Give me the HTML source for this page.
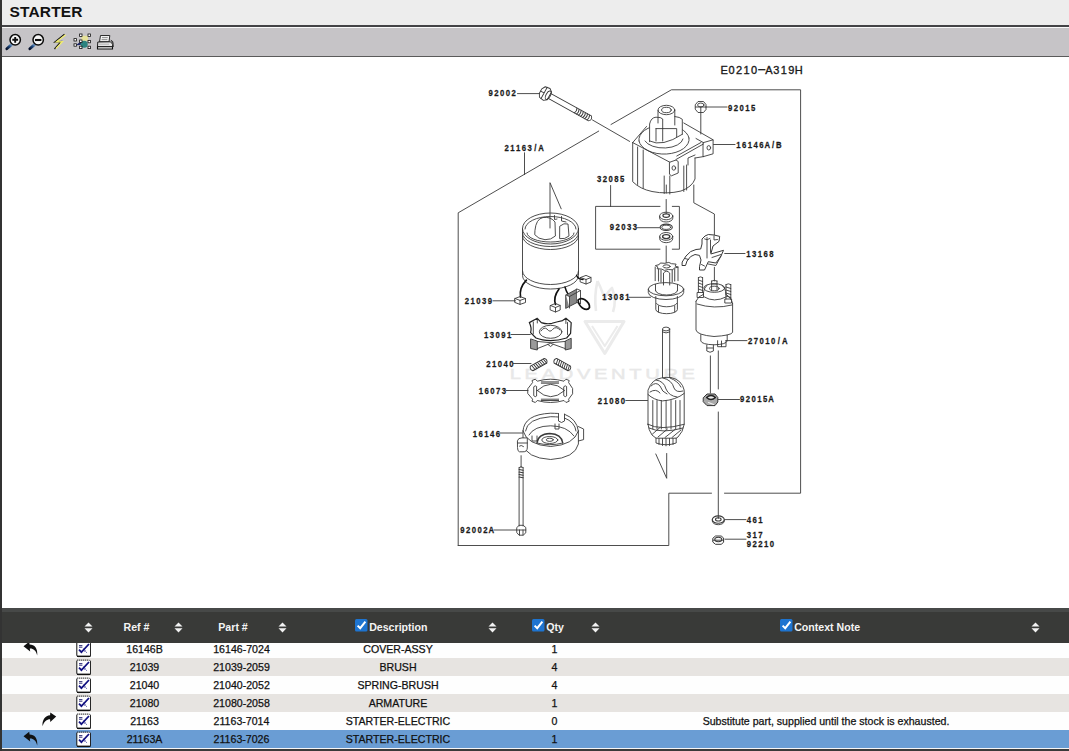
<!DOCTYPE html>
<html><head><meta charset="utf-8">
<style>
html,body{margin:0;padding:0;width:1069px;height:751px;overflow:hidden;background:#fff;font-family:"Liberation Sans",sans-serif;}
#lb{position:absolute;left:0;top:0;width:2px;height:751px;background:#333;}
#title{position:absolute;left:2px;top:0;width:1067px;height:25px;background:#ededed;}
#title span{position:absolute;left:7.5px;top:3px;font-size:15.5px;font-weight:bold;color:#111;letter-spacing:0.15px;}
#l1{position:absolute;left:2px;top:25px;width:1067px;height:2px;background:#434346;}
#l2{position:absolute;left:2px;top:27px;width:1067px;height:1px;background:#fafafa;}
#tb{position:absolute;left:2px;top:28px;width:1067px;height:28px;background:#c6c4c7;}
#l3{position:absolute;left:2px;top:56px;width:1067px;height:1px;background:#5a5a5a;}
#diag{position:absolute;left:0;top:0;width:1069px;height:751px;}
#thead{position:absolute;z-index:3;left:2px;top:608px;width:1067px;height:35px;background:#393a38;}
#thead .hl{position:absolute;left:0;top:0;width:1067px;height:4px;background:#474948;}
.row{position:absolute;left:2px;width:1067px;height:18px;}
.c{position:absolute;font-size:10.6px;color:#111;-webkit-text-stroke:0.25px #111;top:0;height:18px;line-height:18px;text-align:center;white-space:nowrap;}
.h{position:absolute;font-size:10.6px;color:#f4f4f4;font-weight:bold;top:13px;white-space:nowrap;}
.sa{position:absolute;top:14px;width:9px;height:11px;}
#bot{position:absolute;left:2px;top:748px;width:1067px;height:1px;background:#f5f5f5;}
#bot2{position:absolute;left:2px;top:749px;width:1067px;height:2px;background:#3a3a3a;}
</style></head><body>
<svg id="dg" width="1069" height="751" viewBox="0 0 1069 751" style="position:absolute;left:0;top:0">
<g fill="none" stroke="#ebebeb" stroke-width="3" stroke-linejoin="round">
<path d="M585 321.5H624L604.8 353.5Z"/>
<path d="M592 326L604.8 346L617.5 326" stroke-width="2"/>
<path d="M597.5 281Q594 296 596 311M597.5 281Q603 292 604.5 300Q607 292 612 288Q617 300 613 312" stroke-width="2.6"/>
</g>
<text x="0" y="0" transform="translate(604.2 379.3) scale(1.3 1)" text-anchor="middle" font-family="Liberation Sans" font-size="15.5" letter-spacing="2.8" fill="#e8e8e8" stroke="#e8e8e8" stroke-width="0.45">LEADVENTURE</text>
<g fill="none" stroke="#3a3a3a" stroke-width="0.9" stroke-linecap="round" stroke-linejoin="round">
<path d="M458.2 545.5V212.8L598.7 131.1M611 124.5L671.4 89.8H800.6V493.2H724.5M711.5 493.2H668.8V545.5H458.2" />
<path d="M517.5 93.6H539.5" />
<path d="M524.5 152.8V174.6" />
<path d="M706 107H727" />
<path d="M700.8 113V134" />
<path d="M713.5 144.5H735" />
<path d="M610.6 185.5V206.5" />
<path d="M660 206.4H595.6V249.2H660M672.3 206.4H679.4V249.2H672.3" />
<path d="M666.2 199.5V213.5M666.2 246V262.6" />
<path d="M637.5 227.7H659.5" />
<path d="M629 297.3H650.5" />
<path d="M693.8 185V202.8L714.4 214V234.6" />
<path d="M724.7 253.5H745" />
<path d="M714.4 267.3V281" />
<path d="M666.3 193V185" />
<path d="M493 300.8H515.5" />
<path d="M511 334.5H530.3" />
<path d="M513.5 363.5H531" />
<path d="M506 390.5H528" />
<path d="M500 433H522.5" />
<path d="M494 530H516.5" />
<path d="M521.1 455.7V467.5" />
<path d="M625.8 400.5H647.5" />
<path d="M655.8 454L666.7 478.3V453.5" />
<path d="M550 228V182.7L561.2 208.8" />
<path d="M726 340.6H747" />
<path d="M710.4 355.9V393M718.3 350.9V389M718.3 412V518.5" />
<path d="M718 399.5H739.5" />
<path d="M725 519.6H746" />
<path d="M725 539.2H746" />
<path d="M592.5 120L629.6 141.4" />
<g transform="translate(545.4 93.7) rotate(29)">
<path d="M-5.5 -2.5L-3.5 -6L1.5 -6.8L4.5 -4.5V4.5L1.5 6.8L-3.5 6L-5.5 2.5Z" />
<path d="M-5.5 0H-1.5M-1.5 -6.5V6.5" />
<ellipse cx="3.2" cy="0" rx="2.2" ry="4.6" />
<path d="M4.8 -2.8H51M4.8 2.8H51M51 -2.8Q54 0 51 2.8" />
<path d="M34.5 -2.8Q36.1 0 34.5 2.8" />
<path d="M36.9 -2.8Q38.5 0 36.9 2.8" />
<path d="M39.3 -2.8Q40.9 0 39.3 2.8" />
<path d="M41.7 -2.8Q43.3 0 41.7 2.8" />
<path d="M44.1 -2.8Q45.7 0 44.1 2.8" />
<path d="M46.5 -2.8Q48.1 0 46.5 2.8" />
<path d="M48.9 -2.8Q50.5 0 48.9 2.8" />
</g>
<path d="M632.7 142.6V181.7Q640 189 652 191.5Q667 194.5 681 191Q692 187 695 179V158" />
<path d="M637.6 147V184.5M643.2 150V188.3M664.2 176V193.5M669.8 176V194M683.8 166V191.5M686.6 165V190" />
<path d="M632.7 142.6L669.8 162.2" />
<path d="M646.5 126.5L632.7 142.6" />
<path d="M669.8 162.2L676 160L678.2 161.5V173L671.5 175.8L669.8 174.5Z" />
<ellipse cx="673.8" cy="168" rx="1.8" ry="2.2" />
<path d="M703.4 142.6L713.1 139.8V153.8L703.4 156.6Z" />
<ellipse cx="708.8" cy="147.8" rx="1.8" ry="2.2" />
<path d="M683.8 123L713.1 139.8M703.4 142.6L696 138.5" />
<path d="M676 159.5L703.4 144M676.8 156L701 142.5" />
<path d="M695 158L703.4 156.6M688 165V158L695 155" />
<path d="M639 141A25 14.5 0 0 1 689 138" />
<path d="M639 141A25 14.5 0 0 0 689 138" />
<path d="M645 141A19.5 10 0 0 0 683 139" />
<path d="M649.6 141.7V124Q651 117.5 656 117.2L658 117V110A8.4 4.7 0 0 1 674.8 110V116.5Q680 117 682.3 119.3V134.3Q670 145 649.6 141.7Z" fill="#fff" stroke="none"/>
<ellipse cx="666.4" cy="110" rx="8.4" ry="4.7" />
<ellipse cx="666.4" cy="110" rx="4.8" ry="2.7" />
<path d="M658 110.5V123M674.8 110.5V125" />
<path d="M649.6 141.7V124Q651 117.5 656 117.2Q661 117 662.7 119V128.6" />
<path d="M674.8 116.5Q680 117 682.3 119.3V134.3" />
<path d="M656 128.6H676.7V137M656 128.6V141M662.7 128.6V141" />
<path d="M649.6 141Q662 147.5 682.3 134.3" />
<path d="M695.5 104.5L698 101.5H703.5L706 104.5V109.5L703.5 112.5H698L695.5 109.5Z" />
<ellipse cx="700.8" cy="105" rx="3.2" ry="2" />
<path d="M695.5 107H706M700.8 107V112.5" />
<ellipse cx="666.2" cy="216" rx="6.6" ry="3.8" />
<ellipse cx="666.2" cy="215.6" rx="3.3" ry="1.8" stroke-width="1.2"/>
<path d="M659.6 216.5V218.2A6.6 3.8 0 0 0 672.8 218.2V216.5" />
<ellipse cx="666.2" cy="227.3" rx="6.1" ry="3.2" stroke-width="1.1"/>
<ellipse cx="666.2" cy="227.3" rx="4.4" ry="2.1" />
<ellipse cx="666.2" cy="236.4" rx="6.5" ry="3.9" />
<ellipse cx="666.2" cy="236.6" rx="3.6" ry="2" stroke-width="1.4"/>
<path d="M659.7 236.6V238.8A6.5 3.9 0 0 0 672.7 238.8V236.6" />
<path d="M682.4 261.7L686 256L690.6 251.6L696 249.5L700.7 249L702 244L702 239L705 236L708.3 234.5L714 235L719.7 236.4L719 241.4L713 246L710.8 254L723.5 250.3L721 256L715.9 263L708.3 261.7L704.5 270L699.5 270L699.5 266.7L701 260L699.5 255.4L695 254.5L690.6 256.6L687 261L685.5 265.5L682.4 265.5Z" stroke-width="1"/>
<path d="M707 237.5V258M710.5 240V252.5M704.5 239Q707 241 710 238.5M712 257.5L721 254.5M708.3 264L715.9 265.5L721 256M685 258.5L688.5 259.5M701.5 264.5L704.5 266" />
<path d="M714 236V240L717.5 239.5" />
<path d="M677.8 267.2 L674.0 268.2 L672.9 269.8 L668.3 269.5 L664.4 270.4 L661.7 269.1 L657.1 268.7 L657.9 267.0 L655.4 265.6 L659.2 264.6 L660.3 263.0 L664.9 263.3 L668.8 262.4 L671.5 263.7 L676.1 264.1 L675.3 265.8Z" />
<ellipse cx="666.6" cy="266.4" rx="3.6" ry="1.6" />
<path d="M655.2 267V280.7M678 267V280.7" />
<path d="M658.5 269V281M661 270V282M672.2 270V282M674.7 269V281" stroke="#555" stroke-width="1.1"/>
<path d="M663.5 285V273Q666.6 269.5 669.7 273V285" />
<ellipse cx="666" cy="289.2" rx="17.7" ry="6.6" />
<path d="M648.3 289.2V292.5A17.7 7 0 0 0 683.7 292.5V289.2" />
<path d="M655.5 290.5A11 4.5 0 0 0 677.5 290.5M655.5 290.5V284.5M677.5 290.5V284.5" />
<path d="M655.8 296.5V309.5A10.8 4.2 0 0 0 677.4 309.5V296.5" />
<path d="M656.5 303.5A10.2 3.8 0 0 0 676.7 303.5M658.5 306V312M674.7 306V312" />
<path d="M662.5 329.5V377.5M669.7 329.5V377.5" />
<ellipse cx="666.1" cy="329" rx="3.6" ry="1.9" />
<path d="M662.5 332Q666 334 669.7 332" />
<path d="M648 424.3V390.2Q652 379 661.3 378Q666 377 671 377.5Q682 380 684.2 390.2V424.3Q683 432 678 437L676.2 438.2H656L652 435Q648.5 430 648 424.3Z" />
<path d="M648 394.5Q654 400 662.4 400.9Q676 400 684.2 393.4" />
<path d="M651 386Q656 381 660 386Q662 392 667 394M656 380Q664 381 666 389Q669 396 677 397M663 378Q672 380 674 388Q676 393 683 391M670 378Q678 381 681 387M650 392Q656 388 660 393" />
<path d="M652.8 400.5V429" />
<path d="M657 400.5V429" />
<path d="M661.3 400.5V429" />
<path d="M666.1 400.5V429" />
<path d="M671 400.5V429" />
<path d="M675.7 400.5V429" />
<path d="M680 400.5V429" />
<path d="M648 424.3Q660 431 684.2 424.3M649 428Q662 434 683 428" />
<path d="M652.5 434L660 427.5M658 437L667.5 429M665 437.5L675 429.5M672 437.5L681 430" />
<path d="M656 438.2V443Q666 446.5 676.2 443V438.2M659 438.5V444.5M662.5 438.5V445.5M666 438.5V445.8M669.5 438.5V445.5M673 438.5V444.5" />
<path d="M696 301.2V330Q697 335 714 336.5Q731 335.5 732.6 332.4V303.6" />
<path d="M696 301.2Q698 296 703.2 294.5M732.6 303.6Q731 297 726 294.5" />
<path d="M697 304Q714 309.5 732 305" />
<path d="M703.2 294.5Q704 287 707 285.5M726 294.5Q725.5 287 722 285.5" />
<ellipse cx="714.3" cy="288" rx="10.5" ry="4.3" />
<ellipse cx="714.3" cy="288.5" rx="4.8" ry="2.3" />
<path d="M704.4 297Q714 303 726 297" />
<path d="M711.6 281V290M717 281V290M711.6 281Q714.3 279.5 717 281M711.6 284H717" />
<path d="M698.4 277.5V292.5M702.6 277.5V292.5M698.4 277.5Q700.5 276 702.6 277.5M697.5 292.5H703.5V297.5H697.5Z" />
<path d="M698.4 280L702.6 281.5" />
<path d="M698.4 283L702.6 284.5" />
<path d="M698.4 286L702.6 287.5" />
<path d="M698.4 289L702.6 290.5" />
<path d="M726 284.5V299M730.8 284.5V299M726 284.5Q728.4 283 730.8 284.5M725.2 299H731.6V303H725.2Z" />
<path d="M726 287L730.8 288.5" />
<path d="M726 290L730.8 291.5" />
<path d="M726 293L730.8 294.5" />
<path d="M726 296L730.8 297.5" />
<path d="M700.8 334.7V341Q702 344.5 714 344.8Q726 344.5 727.2 341V335" />
<path d="M706.8 345V351Q710 353.5 713.4 351V345M707 348H713" />
<path d="M717.6 340.7V346.7H726V340.5M721.5 341V346.7" />
<path d="M703.5 397.5L707 394H715L717.8 397.5V402L715 405.6H707L703.5 402Z" fill="#a9a9a9" stroke="#333" stroke-width="1"/>
<path d="M706.5 397.5Q711 393.5 715.5 397.5Q711 401.5 706.5 397.5Z" fill="#eee" stroke="#222" stroke-width="1.2"/>
<path d="M708.5 402.5L713.5 404.5" stroke="#eee" stroke-width="1.2"/>
<ellipse cx="718.3" cy="519.6" rx="6" ry="3.7" stroke-width="1.1"/>
<ellipse cx="718.3" cy="519.4" rx="2.8" ry="1.6" stroke-width="1.1"/>
<path d="M712.3 519.8V521A6 3.7 0 0 0 724.3 521V519.8" />
<path d="M713.1 538L715.5 536H721.2L723.6 538V542.3L721.2 544.3H715.5L713.1 542.3Z" stroke-width="1"/>
<ellipse cx="718.3" cy="539.5" rx="3.5" ry="2.2" stroke-width="1.1"/>
<path d="M713.1 540.2H723.6" />
<ellipse cx="550.5" cy="228.5" rx="28" ry="15.5" />
<path d="M525 229A25.5 12.5 0 0 1 576 229" />
<path d="M527 233A23.5 9 0 0 0 574 233" />
<path d="M522.5 228.5V275.5A28 13.5 0 0 0 578.5 275.5V228.5" />
<path d="M522.5 233A28 13.5 0 0 0 578.5 233M522.5 236A28 13.5 0 0 0 578.5 236" />
<path d="M522.5 271A28 13.5 0 0 0 578.5 271" />
<path d="M535 230Q536 219 543 217.5Q551 216.5 555 222L555.4 236Q551 240 545 239.7Q538 239 535 235Z" />
<path d="M560 226Q564 222.5 568 224L569 236Q565 239.5 560 238.7Z" />
<path d="M554.5 215.5V219.5L557 219M561.5 216.5V221L566 222" />
<path d="M526.4 280.2Q519 288 520.5 297" stroke="#111" stroke-width="1.7"/>
<path d="M515 298.5L520 296.6L525.5 298.5V302.5L520 304.4L515 302.5Z M515 298.5L520 300.4L525.5 298.5M520 300.4V304.4" />
<path d="M576.6 275.4Q578 279 583 279.5" stroke="#111" stroke-width="1.5"/>
<path d="M580.5 277.5L586 275.4L591 277.5V282L586 284L580.5 282Z M580.5 277.5L586 279.5L591 277.5M586 279.5V284" />
<path d="M559 289Q553 297 555.5 304.5" stroke="#111" stroke-width="1.7"/>
<path d="M550.5 305.5L555.5 303.4L560.2 305.5V310L555.5 312L550.5 310Z M550.5 305.5L555.5 307.5L560.2 305.5M555.5 307.5V312" />
<path d="M565 287Q567 294 569.5 295" stroke="#111" stroke-width="1.5"/>
<path d="M566 295L577 289V302.5L566 308.2Z" fill="#888"/>
<path d="M577 289L580.5 290.5V304L577 302.5M566 295L569.5 296.5V308M569.5 296.5L580.5 290.5" fill="#fff"/>
<path d="M578 300Q580.5 297.5 584.5 299.5Q590 303 589.5 307.5Q587.5 311 582.5 308Q578.5 305 578 300Z" stroke="#111" stroke-width="1.7"/>
<path d="M529.3 322.6L537.3 318.3L541.3 322.6Q547 324.5 552 323.3Q558 321.5 562.6 320.6L565.9 318.3L571.2 322.6L570.6 333.3L566.6 338Q558 340.5 550.6 340.6Q542 340.5 536 338L530.6 332.6Q532 328 529.3 322.6Z" stroke-width="1.2" stroke="#222"/>
<path d="M533.3 322V334M567.5 322.5V334.5M537.3 318.3V323M565.9 318.3V323.5" />
<ellipse cx="550.6" cy="331.8" rx="11.3" ry="6.5" />
<path d="M541 331Q544 326.5 547 329Q550 333 552.5 329.5Q556 325.5 560 330" />
<path d="M530.6 339.3V348.5L537.3 350V341.5Z" fill="#9a9a9a" stroke="#333"/>
<path d="M565.2 341.5V350L571.2 348.6V338.6Z" fill="#9a9a9a" stroke="#333"/>
<path d="M537.3 341.5Q551 344 565.2 341.5M537.3 348.6L550.6 343.3L565.2 348.6M548 344.5L550.6 346.5L553 344.5" />
<g transform="translate(538.6 364.6) rotate(-29)">
<path d="M-8 -2.6H8M-8 2.6H8M-8 -2.6Q-10.5 0 -8 2.6M8 -2.6Q10.5 0 8 2.6" />
<path d="M-6.5 -2.6L-5.5 2.6" />
<path d="M-4.3 -2.6L-3.3 2.6" />
<path d="M-2.1 -2.6L-1.1 2.6" />
<path d="M0.1 -2.6L1.1 2.6" />
<path d="M2.3 -2.6L3.3 2.6" />
<path d="M4.5 -2.6L5.5 2.6" />
<path d="M6.7 -2.6L7.7 2.6" />
</g>
<g transform="translate(562.3 364.6) rotate(29)">
<path d="M-8 -2.6H8M-8 2.6H8M-8 -2.6Q-10.5 0 -8 2.6M8 -2.6Q10.5 0 8 2.6" />
<path d="M-6.5 -2.6L-5.5 2.6" />
<path d="M-4.3 -2.6L-3.3 2.6" />
<path d="M-2.1 -2.6L-1.1 2.6" />
<path d="M0.1 -2.6L1.1 2.6" />
<path d="M2.3 -2.6L3.3 2.6" />
<path d="M4.5 -2.6L5.5 2.6" />
<path d="M6.7 -2.6L7.7 2.6" />
</g>
<path d="M528 388.5L532.6 382.5L532 380.5L535.3 379.2L537.3 381.2Q544 379.2 550.6 379.2Q557 379.2 564 381.2L566 379.2L569.2 380.5L568.6 382.5L572.6 388.5V393.8L568.6 399.2L569.2 401.2L566 402.5L564 400.5Q557 402.5 550.6 402.5Q544 402.5 537.3 400.5L535.3 402.5L532 401.2L532.6 399.2L528 393.8Z" />
<path d="M537.3 390.5Q550.6 378 564.6 390.5Q550.6 403 537.3 390.5Z" />
<path d="M541.3 381.9H558.6M541.3 383.2H558.6M541.3 399.2H558.6M541.3 400.5H558.6" />
<path d="M534 386.5Q535.3 385 536.6 386.5V396Q535.3 397.5 534 396Z M564 386.5Q565.3 385 566.6 386.5V396Q565.3 397.5 564 396Z" />
<path d="M523 431Q524 414.5 550.7 413.2Q560 413.5 558.5 413.5M564.5 414.2Q577 419 578.4 431" />
<path d="M558.5 413.5V421Q561.5 424 564.5 421V414.2" />
<path d="M525.5 431Q527 418.5 550.7 416.7Q556 416.8 558.5 417M564.5 418Q575 422 576 431" />
<path d="M523 431V444Q526 458 550.7 459.5Q575 458 578.4 444V431" />
<path d="M523 431Q527 445 550.7 446.5Q574 445 578.4 431" />
<path d="M529 435Q534 426 550.7 425.8Q567 426 574 436" />
<path d="M537 443Q538 434 549.8 433.5Q561.5 434 562.8 443" stroke-width="1.3"/>
<ellipse cx="549.8" cy="440" rx="8" ry="3.5" />
<ellipse cx="549.8" cy="439.8" rx="3.5" ry="1.6" />
<path d="M537 443Q549.8 446.5 562.8 443" />
<path d="M517.5 440.5Q518 437.8 522 437.9H527.3V448Q527 452 523 451.8H519.5Q517.5 451.5 517.5 448Z" fill="#fff"/>
<path d="M517.5 443H527.3M519.5 446Q521 444.5 523.5 446.5" />
<path d="M578.4 426.6L583.6 429V439.6L578.4 441" />
<path d="M555 424V429H559V424M532 436V441H537V436" />
<path d="M519.1 467.5V526M523.1 467.5V526M519.1 467.5Q521.1 465.5 523.1 467.5" />
<path d="M519.1 469.5L523.1 470.3" stroke-width="1.1"/>
<path d="M519.1 472L523.1 472.8" stroke-width="1.1"/>
<path d="M519.1 474.5L523.1 475.3" stroke-width="1.1"/>
<path d="M519.1 477L523.1 477.8" stroke-width="1.1"/>
<path d="M517 527.5L519 525.3H523.2L525.8 527.5V532.8L523.2 535.2H519L517 532.8Z" />
<path d="M517 530H525.8M519.5 530V535M523 530V535" />
</g>
<text transform="scale(0.86 1)" x="570.58 577.27 583.95 590.64 597.33" y="96.5" text-anchor="middle" font-family="Liberation Sans" font-weight="bold" font-size="9.0" fill="#1a1a1a" stroke="#1a1a1a" stroke-width="0.25">92002</text>
<text transform="scale(0.86 1)" x="589.07 595.76 602.44 609.13 615.81 622.50 629.19" y="151.1" text-anchor="middle" font-family="Liberation Sans" font-weight="bold" font-size="9.0" fill="#1a1a1a" stroke="#1a1a1a" stroke-width="0.25">21163/A</text>
<text transform="scale(0.86 1)" x="848.95 855.64 862.33 869.01 875.70" y="111.1" text-anchor="middle" font-family="Liberation Sans" font-weight="bold" font-size="9.0" fill="#1a1a1a" stroke="#1a1a1a" stroke-width="0.25">92015</text>
<text transform="scale(0.86 1)" x="858.72 865.41 872.09 878.78 885.47 892.15 898.84 905.52" y="148.4" text-anchor="middle" font-family="Liberation Sans" font-weight="bold" font-size="9.0" fill="#1a1a1a" stroke="#1a1a1a" stroke-width="0.25">16146A/B</text>
<text transform="scale(0.86 1)" x="696.74 703.43 710.12 716.80 723.49" y="182.5" text-anchor="middle" font-family="Liberation Sans" font-weight="bold" font-size="9.0" fill="#1a1a1a" stroke="#1a1a1a" stroke-width="0.25">32085</text>
<text transform="scale(0.86 1)" x="711.51 718.20 724.88 731.57 738.26" y="230.5" text-anchor="middle" font-family="Liberation Sans" font-weight="bold" font-size="9.0" fill="#1a1a1a" stroke="#1a1a1a" stroke-width="0.25">92033</text>
<text transform="scale(0.86 1)" x="870.35 877.03 883.72 890.41 897.09" y="256.7" text-anchor="middle" font-family="Liberation Sans" font-weight="bold" font-size="9.0" fill="#1a1a1a" stroke="#1a1a1a" stroke-width="0.25">13168</text>
<text transform="scale(0.86 1)" x="702.91 709.59 716.28 722.97 729.65" y="300.2" text-anchor="middle" font-family="Liberation Sans" font-weight="bold" font-size="9.0" fill="#1a1a1a" stroke="#1a1a1a" stroke-width="0.25">13081</text>
<text transform="scale(0.86 1)" x="543.02 549.71 556.40 563.08 569.77" y="304.0" text-anchor="middle" font-family="Liberation Sans" font-weight="bold" font-size="9.0" fill="#1a1a1a" stroke="#1a1a1a" stroke-width="0.25">21039</text>
<text transform="scale(0.86 1)" x="565.35 572.03 578.72 585.41 592.09" y="338.0" text-anchor="middle" font-family="Liberation Sans" font-weight="bold" font-size="9.0" fill="#1a1a1a" stroke="#1a1a1a" stroke-width="0.25">13091</text>
<text transform="scale(0.86 1)" x="567.79 574.48 581.16 587.85 594.53" y="366.9" text-anchor="middle" font-family="Liberation Sans" font-weight="bold" font-size="9.0" fill="#1a1a1a" stroke="#1a1a1a" stroke-width="0.25">21040</text>
<text transform="scale(0.86 1)" x="559.30 565.99 572.67 579.36 586.05" y="393.7" text-anchor="middle" font-family="Liberation Sans" font-weight="bold" font-size="9.0" fill="#1a1a1a" stroke="#1a1a1a" stroke-width="0.25">16073</text>
<text transform="scale(0.86 1)" x="697.67 704.36 711.05 717.73 724.42" y="404.4" text-anchor="middle" font-family="Liberation Sans" font-weight="bold" font-size="9.0" fill="#1a1a1a" stroke="#1a1a1a" stroke-width="0.25">21080</text>
<text transform="scale(0.86 1)" x="872.33 879.01 885.70 892.38 899.07 905.76 912.44" y="343.9" text-anchor="middle" font-family="Liberation Sans" font-weight="bold" font-size="9.0" fill="#1a1a1a" stroke="#1a1a1a" stroke-width="0.25">27010/A</text>
<text transform="scale(0.86 1)" x="863.02 869.71 876.40 883.08 889.77 896.45" y="402.4" text-anchor="middle" font-family="Liberation Sans" font-weight="bold" font-size="9.0" fill="#1a1a1a" stroke="#1a1a1a" stroke-width="0.25">92015A</text>
<text transform="scale(0.86 1)" x="552.09 558.78 565.47 572.15 578.84" y="436.6" text-anchor="middle" font-family="Liberation Sans" font-weight="bold" font-size="9.0" fill="#1a1a1a" stroke="#1a1a1a" stroke-width="0.25">16146</text>
<text transform="scale(0.86 1)" x="537.79 544.48 551.16 557.85 564.53 571.22" y="533.3" text-anchor="middle" font-family="Liberation Sans" font-weight="bold" font-size="9.0" fill="#1a1a1a" stroke="#1a1a1a" stroke-width="0.25">92002A</text>
<text transform="scale(0.86 1)" x="870.81 877.50 884.19" y="523.1" text-anchor="middle" font-family="Liberation Sans" font-weight="bold" font-size="9.0" fill="#1a1a1a" stroke="#1a1a1a" stroke-width="0.25">461</text>
<text transform="scale(0.86 1)" x="870.81 877.50 884.19" y="538.2" text-anchor="middle" font-family="Liberation Sans" font-weight="bold" font-size="9.0" fill="#1a1a1a" stroke="#1a1a1a" stroke-width="0.25">317</text>
<text transform="scale(0.86 1)" x="870.81 877.50 884.19 890.87 897.56" y="547.0" text-anchor="middle" font-family="Liberation Sans" font-weight="bold" font-size="9.0" fill="#1a1a1a" stroke="#1a1a1a" stroke-width="0.25">92210</text>
<text x="724.20 731.65 739.10 746.55 754.00 761.45 768.90 776.35 783.80 791.25 798.70" y="73.8" text-anchor="middle" font-family="Liberation Sans" font-size="11" fill="#1a1a1a" stroke="#1a1a1a" stroke-width="0.35">E0210 A319H</text><path d="M758.2 69.7H765.4" stroke="#1a1a1a" stroke-width="1.3"/>
</svg>
<div id="title"><span>STARTER</span></div>
<div id="l1"></div><div id="l2"></div>
<div id="tb"></div>
<svg id="tbi" width="130" height="28" viewBox="0 28 130 28" style="position:absolute;left:0;top:28px">
<defs><linearGradient id="hg" x1="0" y1="1" x2="1" y2="0"><stop offset="0" stop-color="#06102a"/><stop offset="0.55" stop-color="#1f4a80"/><stop offset="1" stop-color="#7da4cf"/></linearGradient></defs>
<line x1="6.8" y1="48.8" x2="11.8" y2="44.4" stroke="url(#hg)" stroke-width="2.8" stroke-linecap="round"/>
<circle cx="15.2" cy="39.8" r="5.2" fill="#f7f7f7" stroke="#0c0c0c" stroke-width="1.5"/>
<path d="M12.3 39.8h5.8M15.2 36.9v5.8" stroke="#0c0c0c" stroke-width="1.9"/>
<line x1="29.8" y1="48.8" x2="34.8" y2="44.4" stroke="url(#hg)" stroke-width="2.8" stroke-linecap="round"/>
<circle cx="38.2" cy="39.8" r="5.2" fill="#f7f7f7" stroke="#0c0c0c" stroke-width="1.5"/>
<path d="M35 40h6.4" stroke="#0c0c0c" stroke-width="2.1"/>
<path d="M64.5 34.2L55 42L61 41.6L54.5 49" fill="none" stroke="#111" stroke-width="1.3"/>
<path d="M65.6 34.8L56.6 41.8L62.4 41.6L55.8 48.6" fill="none" stroke="#f2ee6e" stroke-width="1.3"/>
<rect x="81.5" y="35.8" width="6.5" height="5" fill="#e6e29a"/>
<path d="M75.5 45.5L81 41.2L82.8 44.5Z" fill="#1a2566"/>
<circle cx="84.2" cy="44.2" r="3.5" fill="#2b837f"/>
<g fill="#fff" stroke="#111" stroke-width="0.8">
<rect x="79.6" y="34" width="2.4" height="2.4"/><rect x="88" y="34" width="2.4" height="2.4"/>
<rect x="74" y="38.6" width="2.4" height="2.4"/><rect x="74" y="43.8" width="2.4" height="2.4"/>
<rect x="79.6" y="40" width="2.4" height="2.4"/><rect x="88" y="40.4" width="2.4" height="2.4"/>
<rect x="79.6" y="46.2" width="2.4" height="2.4"/><rect x="88" y="46.2" width="2.4" height="2.4"/>
</g>
<path d="M100.5 35.5L109.8 35.5L109 41.8L99.5 41.8Z" fill="#f2f2f2" stroke="#1a1a1a" stroke-width="0.9"/>
<path d="M102 37.6h5.8M101.6 39.6h5.8" stroke="#666" stroke-width="0.7"/>
<path d="M97.8 42L110.5 41.8L112.5 44V46.8H97.5Z" fill="#e4e4e4" stroke="#1a1a1a" stroke-width="1"/>
<path d="M97.5 46.8H112.5V49H97.5Z" fill="#f4f4f4" stroke="#0e0e0e" stroke-width="1.1"/>
<path d="M110.8 40.2Q113.5 40.8 113.2 44.5V47" fill="#6a6a6a" stroke="#222" stroke-width="0.9"/>
<path d="M99 44.2H109" stroke="#aaa" stroke-width="0.8"/>
</svg>
<div id="l3"></div>

<div id="thead"><div class="hl"></div>
<svg class="sa" style="left:82.0px" width="9" height="11" viewBox="0 0 9 11"><path d="M4.5 0.5L8.5 4.6H0.5Z M0.5 6.2H8.5L4.5 10.5Z" fill="#f2f2f2"/></svg><span class="h" style="left:121.5px">Ref #</span><svg class="sa" style="left:172.0px" width="9" height="11" viewBox="0 0 9 11"><path d="M4.5 0.5L8.5 4.6H0.5Z M0.5 6.2H8.5L4.5 10.5Z" fill="#f2f2f2"/></svg><span class="h" style="left:216.3px">Part #</span><svg class="sa" style="left:275.5px" width="9" height="11" viewBox="0 0 9 11"><path d="M4.5 0.5L8.5 4.6H0.5Z M0.5 6.2H8.5L4.5 10.5Z" fill="#f2f2f2"/></svg><svg style="position:absolute;left:353px;top:11px" width="13" height="13" viewBox="0 0 13 13"><rect x="0" y="0" width="12.5" height="12.5" rx="1.5" fill="#1e74d0"/><path d="M2.6 6.6L5.2 9.2L10.4 2.6" fill="none" stroke="#fff" stroke-width="2"/></svg><span class="h" style="left:367.2px">Description</span><svg class="sa" style="left:485.5px" width="9" height="11" viewBox="0 0 9 11"><path d="M4.5 0.5L8.5 4.6H0.5Z M0.5 6.2H8.5L4.5 10.5Z" fill="#f2f2f2"/></svg><svg style="position:absolute;left:529.5px;top:11px" width="13" height="13" viewBox="0 0 13 13"><rect x="0" y="0" width="12.5" height="12.5" rx="1.5" fill="#1e74d0"/><path d="M2.6 6.6L5.2 9.2L10.4 2.6" fill="none" stroke="#fff" stroke-width="2"/></svg><span class="h" style="left:544.2px">Qty</span><svg class="sa" style="left:589.3px" width="9" height="11" viewBox="0 0 9 11"><path d="M4.5 0.5L8.5 4.6H0.5Z M0.5 6.2H8.5L4.5 10.5Z" fill="#f2f2f2"/></svg><svg style="position:absolute;left:778px;top:11px" width="13" height="13" viewBox="0 0 13 13"><rect x="0" y="0" width="12.5" height="12.5" rx="1.5" fill="#1e74d0"/><path d="M2.6 6.6L5.2 9.2L10.4 2.6" fill="none" stroke="#fff" stroke-width="2"/></svg><span class="h" style="left:792.2px">Context Note</span><svg class="sa" style="left:1028.5px" width="9" height="11" viewBox="0 0 9 11"><path d="M4.5 0.5L8.5 4.6H0.5Z M0.5 6.2H8.5L4.5 10.5Z" fill="#f2f2f2"/></svg>
</div>

<div class="row" style="top:640px;background:#fefefe"><svg style="position:absolute;left:19px;top:1px" width="20" height="16" viewBox="0 0 20 16"><path d="M2.5 5.2L8.2 0.8L8.6 3.6C13.5 3.6 17 7.5 16.2 14.5C15 9.4 12.2 7.4 8.8 7.6L9.2 10.6Z" fill="#111"/></svg><svg style="position:absolute;left:72px;top:0px" width="17" height="18" viewBox="0 0 17 18"><path d="M2.8 2.6V15.2Q2.8 16.6 4.2 16.6H15.2Q16.6 16.6 16.6 15.2V3.8Q16.6 2.6 15.4 2.2" fill="#fff" stroke="#111" stroke-width="1"/><path d="M3 16.3H16.4" stroke="#111" stroke-width="1.4"/><path d="M3.2 2.2H15.2" stroke="#222" stroke-width="1.3" stroke-dasharray="1.1 0.9"/><path d="M5 5.6h3.4M5 7.2h3.4" stroke="#1a1a6a" stroke-width="0.9"/><path d="M5 9.6L7.4 12.2L15 4" fill="none" stroke="#101080" stroke-width="1.7"/><path d="M9.6 8.8h1.4M10.2 11h1.6M12.4 12.4h0.6" stroke="#101080" stroke-width="1"/></svg><div class="c" style="left:82.5px;width:120px">16146B</div><div class="c" style="left:179.5px;width:120px">16146-7024</div><div class="c" style="left:296px;width:200px">COVER-ASSY</div><div class="c" style="left:522.4px;width:60px">1</div></div>
<div class="row" style="top:658px;background:#e7e4e1"><svg style="position:absolute;left:72px;top:0px" width="17" height="18" viewBox="0 0 17 18"><path d="M2.8 2.6V15.2Q2.8 16.6 4.2 16.6H15.2Q16.6 16.6 16.6 15.2V3.8Q16.6 2.6 15.4 2.2" fill="#fff" stroke="#111" stroke-width="1"/><path d="M3 16.3H16.4" stroke="#111" stroke-width="1.4"/><path d="M3.2 2.2H15.2" stroke="#222" stroke-width="1.3" stroke-dasharray="1.1 0.9"/><path d="M5 5.6h3.4M5 7.2h3.4" stroke="#1a1a6a" stroke-width="0.9"/><path d="M5 9.6L7.4 12.2L15 4" fill="none" stroke="#101080" stroke-width="1.7"/><path d="M9.6 8.8h1.4M10.2 11h1.6M12.4 12.4h0.6" stroke="#101080" stroke-width="1"/></svg><div class="c" style="left:82.5px;width:120px">21039</div><div class="c" style="left:179.5px;width:120px">21039-2059</div><div class="c" style="left:296px;width:200px">BRUSH</div><div class="c" style="left:522.4px;width:60px">4</div></div>
<div class="row" style="top:676px;background:#fefefe"><svg style="position:absolute;left:72px;top:0px" width="17" height="18" viewBox="0 0 17 18"><path d="M2.8 2.6V15.2Q2.8 16.6 4.2 16.6H15.2Q16.6 16.6 16.6 15.2V3.8Q16.6 2.6 15.4 2.2" fill="#fff" stroke="#111" stroke-width="1"/><path d="M3 16.3H16.4" stroke="#111" stroke-width="1.4"/><path d="M3.2 2.2H15.2" stroke="#222" stroke-width="1.3" stroke-dasharray="1.1 0.9"/><path d="M5 5.6h3.4M5 7.2h3.4" stroke="#1a1a6a" stroke-width="0.9"/><path d="M5 9.6L7.4 12.2L15 4" fill="none" stroke="#101080" stroke-width="1.7"/><path d="M9.6 8.8h1.4M10.2 11h1.6M12.4 12.4h0.6" stroke="#101080" stroke-width="1"/></svg><div class="c" style="left:82.5px;width:120px">21040</div><div class="c" style="left:179.5px;width:120px">21040-2052</div><div class="c" style="left:296px;width:200px">SPRING-BRUSH</div><div class="c" style="left:522.4px;width:60px">4</div></div>
<div class="row" style="top:694px;background:#e7e4e1"><svg style="position:absolute;left:72px;top:0px" width="17" height="18" viewBox="0 0 17 18"><path d="M2.8 2.6V15.2Q2.8 16.6 4.2 16.6H15.2Q16.6 16.6 16.6 15.2V3.8Q16.6 2.6 15.4 2.2" fill="#fff" stroke="#111" stroke-width="1"/><path d="M3 16.3H16.4" stroke="#111" stroke-width="1.4"/><path d="M3.2 2.2H15.2" stroke="#222" stroke-width="1.3" stroke-dasharray="1.1 0.9"/><path d="M5 5.6h3.4M5 7.2h3.4" stroke="#1a1a6a" stroke-width="0.9"/><path d="M5 9.6L7.4 12.2L15 4" fill="none" stroke="#101080" stroke-width="1.7"/><path d="M9.6 8.8h1.4M10.2 11h1.6M12.4 12.4h0.6" stroke="#101080" stroke-width="1"/></svg><div class="c" style="left:82.5px;width:120px">21080</div><div class="c" style="left:179.5px;width:120px">21080-2058</div><div class="c" style="left:296px;width:200px">ARMATURE</div><div class="c" style="left:522.4px;width:60px">1</div></div>
<div class="row" style="top:712px;background:#fefefe"><svg style="position:absolute;left:37px;top:0px" width="20" height="16" viewBox="0 0 20 16"><path d="M17.2 4.4L11.3 0.6L11.1 3.2C6.2 3.6 2.8 8 3.6 14.2C4.8 9.6 7.8 7.2 11.1 7.2L11.3 10Z" fill="#111"/></svg><svg style="position:absolute;left:72px;top:0px" width="17" height="18" viewBox="0 0 17 18"><path d="M2.8 2.6V15.2Q2.8 16.6 4.2 16.6H15.2Q16.6 16.6 16.6 15.2V3.8Q16.6 2.6 15.4 2.2" fill="#fff" stroke="#111" stroke-width="1"/><path d="M3 16.3H16.4" stroke="#111" stroke-width="1.4"/><path d="M3.2 2.2H15.2" stroke="#222" stroke-width="1.3" stroke-dasharray="1.1 0.9"/><path d="M5 5.6h3.4M5 7.2h3.4" stroke="#1a1a6a" stroke-width="0.9"/><path d="M5 9.6L7.4 12.2L15 4" fill="none" stroke="#101080" stroke-width="1.7"/><path d="M9.6 8.8h1.4M10.2 11h1.6M12.4 12.4h0.6" stroke="#101080" stroke-width="1"/></svg><div class="c" style="left:82.5px;width:120px">21163</div><div class="c" style="left:179.5px;width:120px">21163-7014</div><div class="c" style="left:296px;width:200px">STARTER-ELECTRIC</div><div class="c" style="left:522.4px;width:60px">0</div><div class="c" style="left:624px;width:400px">Substitute part, supplied until the stock is exhausted.</div></div>
<div class="row" style="top:730px;background:#6a9dd4"><svg style="position:absolute;left:19px;top:1px" width="20" height="16" viewBox="0 0 20 16"><path d="M2.5 5.2L8.2 0.8L8.6 3.6C13.5 3.6 17 7.5 16.2 14.5C15 9.4 12.2 7.4 8.8 7.6L9.2 10.6Z" fill="#111"/></svg><svg style="position:absolute;left:72px;top:0px" width="17" height="18" viewBox="0 0 17 18"><path d="M2.8 2.6V15.2Q2.8 16.6 4.2 16.6H15.2Q16.6 16.6 16.6 15.2V3.8Q16.6 2.6 15.4 2.2" fill="#fff" stroke="#111" stroke-width="1"/><path d="M3 16.3H16.4" stroke="#111" stroke-width="1.4"/><path d="M3.2 2.2H15.2" stroke="#222" stroke-width="1.3" stroke-dasharray="1.1 0.9"/><path d="M5 5.6h3.4M5 7.2h3.4" stroke="#1a1a6a" stroke-width="0.9"/><path d="M5 9.6L7.4 12.2L15 4" fill="none" stroke="#101080" stroke-width="1.7"/><path d="M9.6 8.8h1.4M10.2 11h1.6M12.4 12.4h0.6" stroke="#101080" stroke-width="1"/></svg><div class="c" style="left:82.5px;width:120px">21163A</div><div class="c" style="left:179.5px;width:120px">21163-7026</div><div class="c" style="left:296px;width:200px">STARTER-ELECTRIC</div><div class="c" style="left:522.4px;width:60px">1</div></div>
<div id="bot"></div><div id="bot2"></div>
<div id="lb"></div>
</body></html>
